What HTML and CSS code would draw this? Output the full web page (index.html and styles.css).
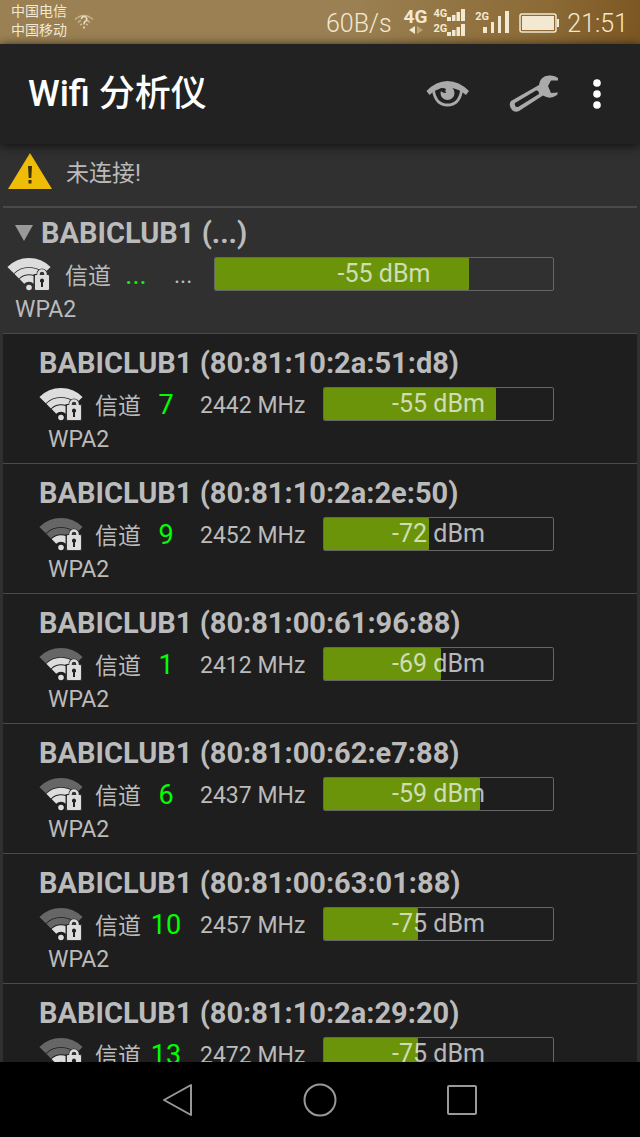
FILE: index.html
```html
<!DOCTYPE html>
<html lang="zh-CN">
<head>
<meta charset="utf-8">
<meta name="viewport" content="width=device-width, initial-scale=1">
<title>Wifi 分析仪</title>
<link rel="stylesheet" href="styles.css">
</head>
<body>
<svg class="defs" aria-hidden="true">
  <symbol id="wifi-lock" viewBox="0 0 44 36">
    <g fill="none">
      <path class="arc arc-3" stroke-width="9" d="M3.6 14.1A26 26 0 0 1 40.400 14.1"/>
      <path class="arc arc-2" stroke-width="6.500" d="M9.600 20.1A17.500 17.500 0 0 1 34.400 20.1"/>
      <path class="arc arc-1" stroke-width="6.500" d="M14.900 25.4A10 10 0 0 1 29.1 25.4"/>
    </g>
    <circle class="lit" cx="22" cy="31.500" r="2.800"/>
    <path class="halo" d="M29.500 18a5.500 5.500 0 0 1 11 0h2.500v17H26.500V18z"/>
    <path class="shackle" d="M31.500 20v-2a3.500 3.500 0 0 1 7 0v2"/>
    <rect class="lit" x="28" y="19" width="14" height="15" rx="1"/>
    <path class="keyhole" d="M35 22.500a2.200 2.200 0 0 1 1 4.100V31h-2v-4.400a2.200 2.200 0 0 1 1-4.100z"/>
  </symbol>
</svg>
<div class="screen">
  <header class="status">
    <div class="carriers"><span>中国电信</span><span>中国移动</span></div>
    <svg class="wifi-unknown" width="20" height="16" viewBox="0 0 20 16" fill="none" aria-hidden="true">
      <path d="M1 5.500Q10-2.500 19 5.500M4 8.500Q6 6.500 7 6.500M16 8.500Q14 6.500 13 6.500M6 11l2-1M14 11l-2-1" stroke="#c9b78e" stroke-width="1.500"/>
      <path d="M7.500 5a2.600 2.600 0 1 1 3.600 2.500Q10 8 10 10.500M10 12.500v2" stroke="#eadfc4" stroke-width="1.600"/>
    </svg>
    <div class="indicators">
      <span class="speed">60B/s</span>
      <div class="data">
        <b>4G</b>
        <svg width="14" height="8" viewBox="0 0 14 8" aria-hidden="true"><path d="M6 0v8L0 4z" fill="#f3e9d2"/><path d="M8 0v8l6-4z" fill="#bda578"/></svg>
      </div>
      <div class="dual">
        <div class="sim"><b>4G</b><svg width="18" height="12" viewBox="0 0 18 12" aria-hidden="true"><path d="M0 8h4v4H0zM5 6h3.500v6H5zM9.500 3h3.500v9H9.500zM14 0h4v12h-4z"/></svg></div>
        <div class="sim"><b>2G</b><svg width="18" height="12" viewBox="0 0 18 12" aria-hidden="true"><path d="M0 8h4v4H0zM5 6h3.500v6H5zM9.500 3h3.500v9H9.500zM14 0h4v12h-4z"/></svg></div>
      </div>
      <div class="roam"><b>2G</b><svg width="26" height="22" viewBox="0 0 26 22" aria-hidden="true"><path d="M0 16h4v6H0zM8 11h3v11H8zM15 5h3v17h-3zM22 0h4v22h-4z"/></svg></div>
      <svg class="battery" width="40" height="20" viewBox="0 0 40 20" aria-hidden="true"><rect x="1" y="1" width="36" height="18" rx="2" fill="none" stroke="#f3e9d2" stroke-width="1.500"/><path d="M38 6h2v8h-2zM3 3h32v14H3z"/></svg>
      <time class="clock">21:51</time>
    </div>
  </header>

  <nav class="appbar">
    <h1>Wifi 分析仪</h1>
    <button class="action" aria-label="视图">
      <svg width="44" height="28" viewBox="0 0 44 28" aria-hidden="true">
        <path d="M.5 11Q10 1 21.500 1T43 11L40 15L36 12Q29 7.500 21.500 7.500T7 12L3.500 15z" fill="#aaa"/>
        <path d="M7.500 11Q10 25 21.500 25T35.500 11" fill="none" stroke="#aaa" stroke-width="2.800"/>
        <circle cx="21.500" cy="13" r="7" fill="#aaa"/>
        <path d="M13 9Q17 7 20 9Q18.500 11.500 20.500 13Q16 13.500 13 9z" fill="#222"/>
      </svg>
    </button>
    <button class="action" aria-label="设置">
      <svg width="50" height="38" viewBox="0 0 50 38" aria-hidden="true">
        <path fill="#aaa" fill-rule="evenodd" d="M2 26L30 10Q31 1 40 .5Q46 0 49 3V5.500H42L39 11L42 18L49 17.500L48 20Q41 25 34 20.500L10 36Q6 38 3 35Q-1 30 2 26zM6 28L27 15.500Q30 15 30 19L9 32Q5 32 6 28z"/>
      </svg>
    </button>
    <button class="action" aria-label="更多">
      <svg width="8" height="30" viewBox="0 0 8 30" fill="#fff" aria-hidden="true"><circle cx="4" cy="4" r="3.800"/><circle cx="4" cy="15" r="3.800"/><circle cx="4" cy="26" r="3.800"/></svg>
    </button>
  </nav>

  <main class="content">
    <div class="notice">
      <svg width="44" height="36" viewBox="0 0 44 36" aria-hidden="true"><path d="M22 0L44 36H0z" fill="#efbd08"/><path d="M20 13h4l-.7 12h-2.600zM20.500 27h3v3.500h-3z" fill="#3a3008"/></svg>
      <span>未连接!</span>
    </div>

    <section class="network group">
      <h2><svg width="18" height="16" viewBox="0 0 18 16" aria-hidden="true"><path d="M0 0h18L9 16z" fill="#999"/></svg>BABICLUB1 (...)</h2>
      <div class="line">
        <svg class="signal s4" width="44" height="36"><use href="#wifi-lock"/></svg>
        <span class="label">信道</span><span class="channel">...</span><span class="freq">...</span>
        <div class="bar" role="meter" aria-label="信号" aria-valuemin="-100" aria-valuemax="-40" aria-valuenow="-55"><div class="fill" style="width:75%"></div><span class="dbm">-55 dBm</span></div>
      </div>
      <p>WPA2</p>
    </section>

    <ul class="points">
      <li class="network">
        <h2>BABICLUB1 (80:81:10:2a:51:d8)</h2>
        <div class="line">
          <svg class="signal s4" width="44" height="36"><use href="#wifi-lock"/></svg>
          <span class="label">信道</span><span class="channel">7</span><span class="freq">2442 MHz</span>
          <div class="bar" role="meter" aria-label="信号" aria-valuemin="-100" aria-valuemax="-40" aria-valuenow="-55"><div class="fill" style="width:75%"></div><span class="dbm">-55 dBm</span></div>
        </div>
        <p>WPA2</p>
      </li>
      <li class="network">
        <h2>BABICLUB1 (80:81:10:2a:2e:50)</h2>
        <div class="line">
          <svg class="signal s2" width="44" height="36"><use href="#wifi-lock"/></svg>
          <span class="label">信道</span><span class="channel">9</span><span class="freq">2452 MHz</span>
          <div class="bar" role="meter" aria-label="信号" aria-valuemin="-100" aria-valuemax="-40" aria-valuenow="-72"><div class="fill" style="width:46%"></div><span class="dbm">-72 dBm</span></div>
        </div>
        <p>WPA2</p>
      </li>
      <li class="network">
        <h2>BABICLUB1 (80:81:00:61:96:88)</h2>
        <div class="line">
          <svg class="signal s3" width="44" height="36"><use href="#wifi-lock"/></svg>
          <span class="label">信道</span><span class="channel">1</span><span class="freq">2412 MHz</span>
          <div class="bar" role="meter" aria-label="信号" aria-valuemin="-100" aria-valuemax="-40" aria-valuenow="-69"><div class="fill" style="width:51%"></div><span class="dbm">-69 dBm</span></div>
        </div>
        <p>WPA2</p>
      </li>
      <li class="network">
        <h2>BABICLUB1 (80:81:00:62:e7:88)</h2>
        <div class="line">
          <svg class="signal s3" width="44" height="36"><use href="#wifi-lock"/></svg>
          <span class="label">信道</span><span class="channel">6</span><span class="freq">2437 MHz</span>
          <div class="bar" role="meter" aria-label="信号" aria-valuemin="-100" aria-valuemax="-40" aria-valuenow="-59"><div class="fill" style="width:68%"></div><span class="dbm">-59 dBm</span></div>
        </div>
        <p>WPA2</p>
      </li>
      <li class="network">
        <h2>BABICLUB1 (80:81:00:63:01:88)</h2>
        <div class="line">
          <svg class="signal s2" width="44" height="36"><use href="#wifi-lock"/></svg>
          <span class="label">信道</span><span class="channel">10</span><span class="freq">2457 MHz</span>
          <div class="bar" role="meter" aria-label="信号" aria-valuemin="-100" aria-valuemax="-40" aria-valuenow="-75"><div class="fill" style="width:41%"></div><span class="dbm">-75 dBm</span></div>
        </div>
        <p>WPA2</p>
      </li>
      <li class="network">
        <h2>BABICLUB1 (80:81:10:2a:29:20)</h2>
        <div class="line">
          <svg class="signal s2" width="44" height="36"><use href="#wifi-lock"/></svg>
          <span class="label">信道</span><span class="channel">13</span><span class="freq">2472 MHz</span>
          <div class="bar" role="meter" aria-label="信号" aria-valuemin="-100" aria-valuemax="-40" aria-valuenow="-75"><div class="fill" style="width:41%"></div><span class="dbm">-75 dBm</span></div>
        </div>
        <p>WPA2</p>
      </li>
    </ul>
  </main>

  <footer class="navbar">
    <button aria-label="返回"><svg width="34" height="34" viewBox="0 0 34 34" aria-hidden="true"><path d="M30 2V32L3 17z" stroke-linejoin="round"/></svg></button>
    <button aria-label="主页"><svg width="34" height="34" viewBox="0 0 34 34" aria-hidden="true"><circle cx="17" cy="17" r="15.500"/></svg></button>
    <button aria-label="最近任务"><svg width="34" height="34" viewBox="0 0 34 34" aria-hidden="true"><rect x="3" y="3" width="28" height="28" rx="1"/></svg></button>
  </footer>
</div>
</body>
</html>
```
FILE: styles.css
```css
* { box-sizing: border-box; margin: 0; padding: 0; }
body { background: #000; color: #bbb; font-family: Roboto, "Noto Sans CJK SC", sans-serif; font-size: 23px; }
button { background: none; border: 0; display: flex; align-items: center; justify-content: center; }
ul { list-style: none; }
b { font-weight: 700; }
svg { display: block; flex: none; }
.defs { position: absolute; width: 0; height: 0; }
.screen { height: 100vh; display: flex; flex-direction: column; }

.status { flex: none; height: 44px; display: flex; align-items: center; padding: 0 12px 0 11px; color: #f3e9d2; background: linear-gradient(100deg, #9a8052 0%, #9a8052 55%, #8b6a35 85%, #7c5622 100%); }
.status svg { fill: #f3e9d2; }
.carriers { display: flex; flex-direction: column; font-size: 14px; line-height: 19px; padding-bottom: 2px; }
.status .wifi-unknown { fill: none; margin-left: 7px; }
.indicators { margin-left: auto; display: flex; align-items: center; }
.speed, .clock { font-size: 25px; line-height: 40px; padding-top: 4px; font-weight: 300; }
.data { display: flex; flex-direction: column; align-items: center; margin-left: 12px; font-size: 19px; line-height: 18px; padding-bottom: 2px; }
.dual { margin-left: 6px; font-size: 11px; line-height: 11px; display: flex; flex-direction: column; gap: 2px; }
.sim, .roam { display: flex; }
.sim svg { margin-top: 1px; }
.roam { margin-left: 10px; font-size: 11px; line-height: 11px; }
.roam b { width: 8px; white-space: nowrap; }
.battery { margin: 2px 8px 0 10px; }

.appbar { flex: none; height: 100px; display: flex; align-items: center; padding: 0 39px 0 28px; background: #222; color: #fff; box-shadow: 0 2px 10px #111; position: relative; }
.appbar h1 { font-size: 36px; font-weight: 500; line-height: 48px; margin-right: auto; }
.action + .action { margin-left: 39px; }
.action:last-child { margin-left: 34px; }

.content { flex: 1; min-height: 0; overflow: hidden; background: #303030; padding: 0 3px; }
.notice { height: 64px; padding: 0 5px 8px; display: flex; align-items: center; gap: 14px; border-bottom: 2px solid #4a4a4a; }
.network { padding: 11px 83px 6px 36px; border-top: 1px solid #4a4a4a; background: #1e1e1e; }
.network h2 { font-size: 29px; font-weight: 700; line-height: 36px; margin-bottom: 5px; white-space: nowrap; display: flex; align-items: center; }
.network h2 svg { margin-right: 8px; }
.network p { line-height: 35px; padding-left: 9px; }
.line { display: flex; align-items: center; height: 36px; }
.label { margin-left: 12px; }
.channel { width: 50px; text-align: center; color: #0f0; font-size: 27px; flex: none; padding-top: 2px; }
.freq { width: 132px; padding: 2px 0 0 9px; white-space: nowrap; flex: none; }
.bar { flex: 1; height: 34px; border: 1px solid #666; border-radius: 2px; display: grid; }
.bar > * { grid-area: 1 / 1; }
.fill { background: #6b940a; border-radius: 1px; }
.dbm { text-align: center; font-size: 25px; line-height: 32px; color: rgba(255, 255, 255, .7); z-index: 1; }

.group { background: none; border: 0; padding: 7px 83px 6px 4px; }
.group h2 { padding-left: 8px; }
.group p { padding-left: 8px; }
.group .label { margin-left: 14px; }
.group .freq { width: 53px; padding-left: 13px; }

.arc { stroke: #ddd; }
.lit { fill: #ddd; }
.shackle { fill: none; stroke: #ddd; stroke-width: 2.5; }
.halo { fill: #333; }
.keyhole { fill: #222; }
.arc-3 { stroke: var(--outer, #ddd); }
.arc-2 { stroke: var(--middle, #ddd); }
.s3 { --outer: #666; }
.s2 { --outer: #666; --middle: #666; }

.navbar { flex: none; height: 75px; background: #000; display: flex; align-items: center; justify-content: center; gap: 108px; }
.navbar svg { fill: none; stroke: #999; stroke-width: 2; }
```
